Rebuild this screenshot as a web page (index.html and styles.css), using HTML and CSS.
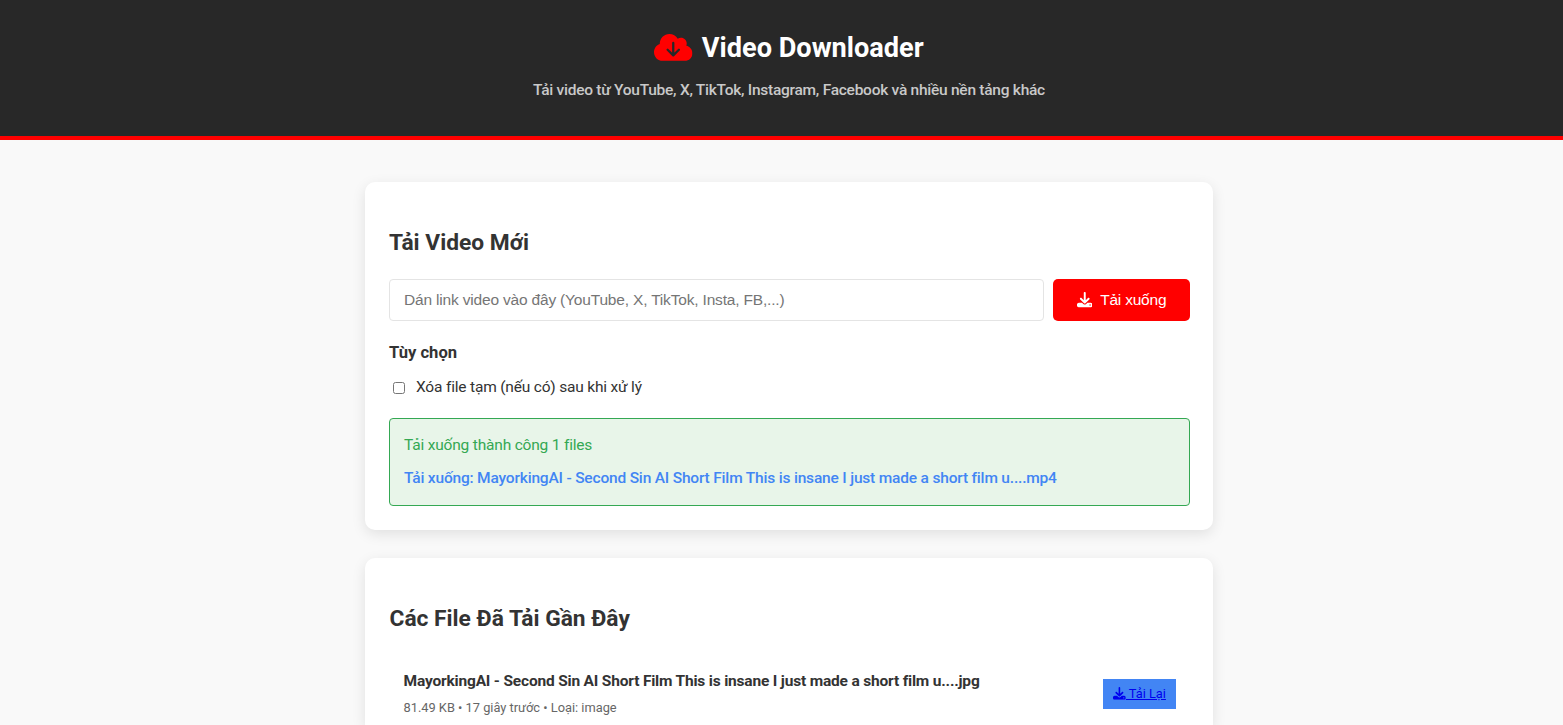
FILE: index.html
```html
<!DOCTYPE html>
<html lang="vi">
<head>
<meta charset="utf-8">
<title>Video Downloader</title>
<link rel="stylesheet" href="styles.css">
</head>
<body>
<svg class="symbols" aria-hidden="true">
  <symbol id="cloud" viewBox="0 0 640 512"><path d="M144 480C64.500 480 0 415.500 0 336c0-62.800 40.200-116.200 96.200-135.900c-.1-2.700-.2-5.400-.2-8.100c0-88.400 71.600-160 160-160c59.300 0 111 32.200 138.700 80.200C409.900 102 428.300 96 448 96c53 0 96 43 96 96c0 12.200-2.300 23.800-6.400 34.600C596 238.400 640 290.100 640 352c0 70.700-57.300 128-128 128H144z"/><path class="cloud-arrow" d="M320 182V386M226 296L320 388L414 296"/></symbol>
  <symbol id="download" viewBox="0 0 512 512"><path d="M288 32c0-17.700-14.300-32-32-32s-32 14.300-32 32V274.700l-73.400-73.400c-12.500-12.500-32.800-12.500-45.300 0s-12.500 32.800 0 45.300l128 128c12.500 12.500 32.800 12.500 45.300 0l128-128c12.500-12.500 12.500-32.800 0-45.300s-32.800-12.500-45.300 0L288 274.700V32zM64 352c-35.300 0-64 28.700-64 64v32c0 35.300 28.700 64 64 64H448c35.300 0 64-28.700 64-64V416c0-35.300-28.700-64-64-64H346.500l-45.300 45.300c-25 25-65.500 25-90.500 0L165.500 352H64zm368 56a24 24 0 1 1 0 48 24 24 0 1 1 0-48z"/></symbol>
</svg>
<header class="header">
  <h1 class="title"><svg class="icon-cloud"><use href="#cloud"/></svg><span>Video Downloader</span></h1>
  <p class="subtitle">Tải video từ YouTube, X, TikTok, Instagram, Facebook và nhiều nền tảng khác</p>
</header>
<main class="main">
  <section class="card card-form">
    <h2 class="heading">Tải Video Mới</h2>
    <form class="form-row">
      <input class="url" type="text" placeholder="Dán link video vào đây (YouTube, X, TikTok, Insta, FB,...)">
      <button class="submit" type="button"><svg class="icon-dl"><use href="#download"/></svg><span>Tải xuống</span></button>
    </form>
    <h3 class="options-title">Tùy chọn</h3>
    <label class="option"><input class="check" type="checkbox"><span>Xóa file tạm (nếu có) sau khi xử lý</span></label>
    <div class="status">
      <p class="status-text">Tải xuống thành công 1 files</p>
      <a class="status-link">Tải xuống: MayorkingAI - Second Sin AI Short Film This is insane I just made a short film u....mp4</a>
    </div>
  </section>
  <section class="card card-files">
    <h2 class="heading">Các File Đã Tải Gần Đây</h2>
    <div class="file">
      <div class="file-info">
        <div class="file-name">MayorkingAI - Second Sin AI Short Film This is insane I just made a short film u....jpg</div>
        <div class="file-meta">81.49 KB • 17 giây trước • Loại: image</div>
      </div>
      <a class="again" href="#"><svg class="icon-small"><use href="#download"/></svg> Tải Lại</a>
    </div>
  </section>
</main>
</body>
</html>
```
FILE: styles.css
```css
* { box-sizing: border-box; }
body { margin: 0; background: #f9f9f9; color: #333; font-family: Roboto, sans-serif; font-size: 15.500px; letter-spacing: -0.185px; }
h1, h2, h3, p { margin: 0; }
svg { fill: currentColor; }
.symbols { display: none; }
.header { height: 140px; padding: 30px 0 0 15px; background: #282828; border-bottom: 4px solid #f00; color: #fff; text-align: center; }
.title { display: flex; justify-content: center; align-items: center; gap: 9px; height: 34px; font-size: 27.150px; line-height: 34px; letter-spacing: 0; }
.title span { padding-top: 2px; }
.icon-cloud { width: 38.500px; height: 30.800px; color: #f00; }
.cloud-arrow { fill: none; stroke: #282828; stroke-width: 38; stroke-linecap: round; stroke-linejoin: round; }
.subtitle { margin-top: 14px; font-size: 15.500px; line-height: 24px; font-weight: 500; letter-spacing: -0.26px; color: #c9c9c9; white-space: nowrap; }
.main { display: flex; flex-direction: column; align-items: center; gap: 28px; padding: 42px 0 0 15px; }
.card { width: 848px; padding: 44px 23px 0 24px; background: #fff; border-radius: 10px; box-shadow: 0 4px 14px rgba(0,0,0,.1); }
.card-form { height: 348px; }
.card-files { height: 167px; padding-left: 24.500px; border-radius: 10px 10px 0 0; }
.heading { font-size: 22.750px; line-height: 34px; letter-spacing: 0; }
.form-row { display: flex; gap: 9px; margin-top: 19px; }
.url { flex: 1; height: 42px; padding: 0 14px; border: 1px solid #e4e4e4; border-radius: 4px; font-family: "Liberation Sans", sans-serif; font-size: 15.500px; letter-spacing: -0.18px; color: #333; }
.url::placeholder { color: #757575; }
.submit { display: flex; align-items: center; justify-content: center; gap: 8px; width: 137px; height: 42px; padding: 0; border: 0; border-radius: 5px; background: #f00; color: #fff; font-family: "Liberation Sans", sans-serif; font-size: 15.500px; letter-spacing: -0.22px; }
.icon-dl { width: 15.500px; height: 15.500px; }
.options-title { margin-top: 19px; font-size: 16.600px; line-height: 26px; letter-spacing: 0; }
.option { display: flex; align-items: center; gap: 11px; height: 24px; margin-top: 9px; }
.check { width: 12px; height: 12px; margin: 1px 0 0 4px; }
.status { height: 88px; margin-top: 19px; padding: 14px; border: 1px solid #34a853; border-radius: 4px; background: #e8f5e9; line-height: 24px; white-space: nowrap; }
.status-text { color: #34a853; }
.status-link { display: block; margin-top: 9px; color: #4285f4; font-weight: 500; }
.file { display: flex; align-items: center; justify-content: space-between; margin-top: 19px; padding: 14px 14px 0; }
.file-name { font-weight: 700; line-height: 24px; white-space: nowrap; }
.file-meta { margin-top: 4px; font-size: 12.820px; line-height: 21px; letter-spacing: 0; color: #666; }
.again { display: block; width: 73px; height: 30px; background: #4285f4; color: #00e; font-size: 12.800px; line-height: 30px; letter-spacing: 0; text-align: center; text-decoration: underline; white-space: nowrap; }
.icon-small { width: 12.800px; height: 12.800px; vertical-align: -2px; }
```
